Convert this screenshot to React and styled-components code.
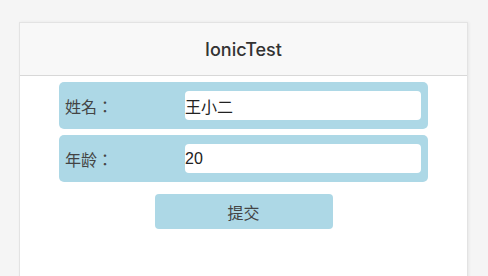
import styled, { createGlobalStyle } from 'styled-components';

const GlobalStyle = createGlobalStyle`
  html, body {
    margin: 0;
    padding: 0;
    background: #f5f5f5;
    font-family: "Liberation Sans", "Noto Sans CJK SC", sans-serif;
  }
`;

const Card = styled.div`
  margin: 22px 20px 0 19px;
  height: 260px;
  background: #fff;
  border: 1px solid #e3e3e3;
  box-shadow: 1px 0 3px rgba(0, 0, 0, 0.06);
`;

const Header = styled.header`
  height: 52px;
  background: #f8f8f8;
  border-bottom: 1px solid #d8d8d8;
  display: flex;
  align-items: center;
  justify-content: center;
  h1 {
    margin: 0;
    font-family: Inter, "Liberation Sans", sans-serif;
    font-size: 18px;
    font-weight: 500;
    color: #333;
  }
`;

const Form = styled.form`
  display: flex;
  flex-direction: column;
  align-items: center;
  padding-top: 6px;
  gap: 6px;
`;

const Row = styled.label`
  width: 369px;
  height: 47px;
  box-sizing: border-box;
  padding: 0 7px 0 6px;
  background: #add8e6;
  border-radius: 5px;
  display: flex;
  align-items: center;
  span {
    width: 120px;
    font-family: "Liberation Sans", "Noto Sans CJK TC", sans-serif;
    font-size: 16px;
    color: #444;
  }
`;

const Input = styled.input`
  flex: 1;
  height: 29px;
  box-sizing: border-box;
  border: none;
  border-radius: 4px;
  padding: 0;
  background: #fff;
  font: 16px "Liberation Sans", "Noto Sans CJK SC", sans-serif;
  color: #222;
  caret-color: #222;
  outline: none;
`;

const Button = styled.button`
  margin-top: 6px;
  width: 178px;
  height: 35px;
  border: none;
  border-radius: 4px;
  background: #add8e6;
  font: 16px "Liberation Sans", "Noto Sans CJK SC", sans-serif;
  color: #444;
`;

const App = () => {
  return (
    <>
      <GlobalStyle />
      <Card>
        <Header>
          <h1>IonicTest</h1>
        </Header>
        <Form>
          <Row>
            <span>姓名：</span>
            <Input defaultValue="王小二" />
          </Row>
          <Row>
            <span>年龄：</span>
            <Input defaultValue="20" autoFocus />
          </Row>
          <Button type="button">提交</Button>
        </Form>
      </Card>
    </>
  );
};

export default App;
